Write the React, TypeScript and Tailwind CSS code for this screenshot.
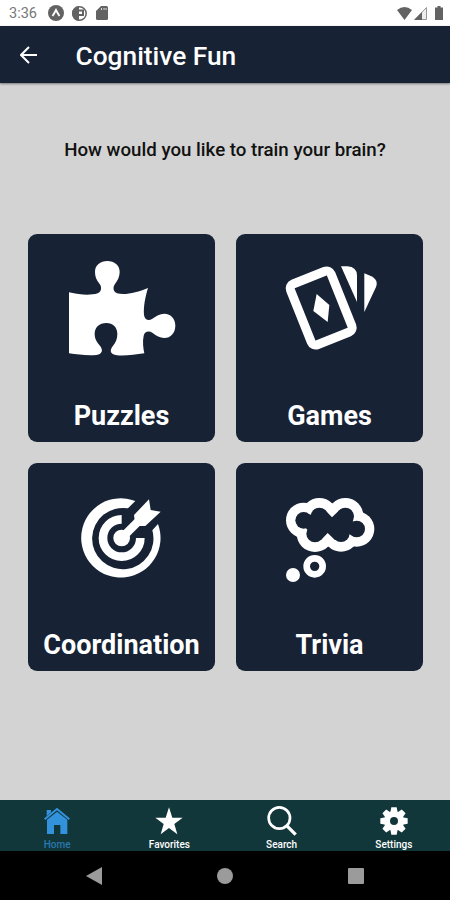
import type { ReactNode } from "react"

function PuzzleIcon() {
  return (
    <svg className="h-[97px] w-[110px]" viewBox="140 105 330 291" fill="white">
      <path d="M146 202C180 210 210 212 232 205C245 199 244 185 238 177C228 165 224 155 224 141C224 120 240 108 261 108C282 108 298 120 298 141C298 155 292 167 284 177C277 186 278 200 290 205C315 211 350 203 383 189C375 215 369 245 371 270C373 285 385 288 395 282C408 273 418 266 432 266C452 266 465 282 465 302C465 323 451 339 432 339C418 339 408 332 397 324C385 316 373 320 370 332C366 350 369 370 372 385C345 389 315 393 290 391C268 388 268 376 277 364C286 353 291 342 291 327C291 307 278 294 258 294C237 294 223 307 223 327C223 342 230 352 239 362C248 374 248 386 228 390C200 393 172 388 146 385Z" />
    </svg>
  )
}

function CardsIcon() {
  return (
    <svg className="h-[88px] w-[94px]" viewBox="162 117 282 264" fill="white">
      <rect
        x="208"
        y="151"
        width="131"
        height="196"
        rx="14"
        fill="none"
        stroke="white"
        strokeWidth="27"
        transform="rotate(-21.8 273.5 249)"
      />
      <path d="M260 207L298 240L293 291L250 258Z" />
      <path d="M333 124H352Q381 126 381 152V231Z" />
      <path d="M403 145L424 154Q446 165 438 186L403 261Z" />
    </svg>
  )
}

function TargetIcon() {
  return (
    <svg className="h-[82px] w-[82px]" viewBox="182 126 246 246" fill="none">
      <path d="M345 138A119 119 0 1 0 413 207L396 226A92 92 0 1 1 323 160Z" fill="white" />
      <path d="M304 193A56 56 0 1 0 360 249" stroke="white" strokeWidth="26" />
      <circle cx="304" cy="249" r="25" fill="white" />
      <path d="M304 249L352 201" stroke="white" strokeWidth="25" />
      <path d="M341 180L386 133L391 165L421 170L375 213H345Z" fill="white" />
    </svg>
  )
}

function ThoughtIcon() {
  return (
    <svg className="h-[86px] w-[90px]" viewBox="164 127 270 258">
      <g fill="white">
        <circle cx="220" cy="197" r="53" />
        <circle cx="267" cy="184" r="54" />
        <circle cx="345" cy="184" r="54" />
        <circle cx="379" cy="223" r="53" />
        <circle cx="332" cy="236" r="55" />
        <circle cx="254" cy="237" r="55" />
        <circle cx="188" cy="361" r="21" />
      </g>
      <g fill="#172235">
        <circle cx="220" cy="197" r="25" />
        <circle cx="267" cy="185" r="26" />
        <circle cx="345" cy="185" r="26" />
        <circle cx="379" cy="223" r="25" />
        <circle cx="332" cy="236" r="26" />
        <circle cx="254" cy="237" r="26" />
        <path d="M226 178L244 180L285 167L305 188L327 167L367 197L374 246L358 239L313 255L292 235L272 256L232 226L226 220Z" />
      </g>
      <circle cx="253" cy="335" r="24" fill="none" stroke="white" strokeWidth="20" />
    </svg>
  )
}

function HomeIcon() {
  return (
    <svg className="h-7 w-7" viewBox="129 49 84 84" fill="#3292db">
      <path d="M140 58H153V65L140 77Z" />
      <path d="M134 86L171 55L208 86" fill="none" stroke="#3292db" strokeWidth="6" />
      <path d="M141 87L171 63L202 87V130H181V103H162V130H141Z" />
    </svg>
  )
}

function StarIcon() {
  return (
    <svg className="h-7 w-7" viewBox="467 49 84 84" fill="white">
      <path d="M509 50L519 81H550L525 100L534 131L509 112L484 131L493 100L468 81H499Z" />
    </svg>
  )
}

function SearchIcon() {
  return (
    <svg className="h-[30px] w-[30px]" viewBox="124 44 90 90" fill="none" stroke="white">
      <circle cx="161" cy="80" r="32" strokeWidth="8" />
      <path d="M183 103L210 130" strokeWidth="10" />
    </svg>
  )
}

const teeth = [0, 45, 90, 135, 180, 225, 270, 315]

function GearIcon() {
  return (
    <svg className="h-7 w-7" viewBox="466 49 84 84" fill="white">
      {teeth.map((angle) => (
        <path key={angle} d="M497 66L500 50H516L519 66Z" transform={`rotate(${angle} 508 91)`} />
      ))}
      <circle cx="508" cy="91" r="21" fill="none" stroke="white" strokeWidth="18" />
    </svg>
  )
}

const categories = [
  { label: "Puzzles", icon: <PuzzleIcon />, pad: "pt-[26px]" },
  { label: "Games", icon: <CardsIcon />, pad: "pt-[30px] pl-[2px]" },
  { label: "Coordination", icon: <TargetIcon />, pad: "pt-[34px]" },
  { label: "Trivia", icon: <ThoughtIcon />, pad: "pt-[34px]" },
]

function CategoryCard({ label, icon, pad }: { label: string; icon: ReactNode; pad: string }) {
  return (
    <button className="flex h-[208px] flex-col items-center justify-between rounded-[9px] bg-[#172235] pb-2">
      <div className={pad}>{icon}</div>
      <span className="text-[27px] leading-9 font-bold text-white">{label}</span>
    </button>
  )
}

const tabs = [
  { label: "Home", icon: <HomeIcon />, color: "text-[#2878ae]" },
  { label: "Favorites", icon: <StarIcon />, color: "text-white" },
  { label: "Search", icon: <SearchIcon />, color: "text-white" },
  { label: "Settings", icon: <GearIcon />, color: "text-white" },
]

function StatusBar() {
  return (
    <div className="flex h-[26px] items-center justify-between bg-white pr-[7px] pl-[9px] text-[#636363]">
      <div className="flex items-center">
        <span className="w-[39px] pt-[2px] text-[14.5px] text-[#777]">3:36</span>
        <svg className="h-4 w-4" viewBox="0 0 16 16">
          <circle cx="8" cy="8" r="8" fill="currentColor" />
          <path d="M4.500 11Q6.500 8 8 5Q9.500 8 11.500 11" fill="none" stroke="white" strokeWidth="1.800" />
        </svg>
        <svg className="ml-2 h-[15px] w-[15px]" viewBox="0 0 15 15">
          <circle cx="7.500" cy="7.500" r="6.700" fill="white" stroke="currentColor" strokeWidth="1.500" />
          <path d="M7 0V15Q0 14 0 7.500Q0 1 7 0Z" fill="currentColor" />
          <path d="M6 4.500H11V9H6" fill="none" stroke="currentColor" strokeWidth="2" />
        </svg>
        <svg className="ml-[9px] h-[14px] w-3" viewBox="0 0 12 14" fill="currentColor">
          <path d="M5 0H10.500Q12 0 12 1.500V12.500Q12 14 10.500 14H1.500Q0 14 0 12.500V5Z" />
          <path d="M5.500 2V4M8 2V4M10 2V4" stroke="#ddd" />
        </svg>
      </div>
      <div className="flex items-center">
        <svg className="h-[13px] w-[15px]" viewBox="0 0 15 13" fill="currentColor">
          <path d="M0 3Q7.500 -3 15 3L7.500 13Z" />
        </svg>
        <svg className="ml-[2px] h-[14px] w-[14px]" viewBox="0 0 14 14">
          <path d="M1 13.500L12.500 1.500V13.500Z" fill="#eee" stroke="#999" />
          <path d="M0 14L8 6V14Z" fill="currentColor" />
        </svg>
        <svg className="ml-[7px] h-[14px] w-2" viewBox="0 0 8 14" fill="currentColor">
          <path d="M2.500 0H5.500V1.500H8V14H0V1.500H2.500Z" />
        </svg>
      </div>
    </div>
  )
}

export default function App() {
  return (
    <div className="flex h-[900px] w-[450px] flex-col overflow-hidden bg-[#d3d3d3] font-[Roboto,sans-serif]">
      <StatusBar />
      <header className="flex h-[57px] items-center bg-[#172235] pl-5 text-white shadow-[0_1px_2px_#777]">
        <svg className="h-[18px] w-[18px]" viewBox="0 0 18 18" fill="none" stroke="white" strokeWidth="2">
          <path d="M17 9H1.500M9 1L1 9L9 17" />
        </svg>
        <h1 className="ml-[37.5px] pt-[3px] text-[26.3px] leading-8 font-medium">Cognitive Fun</h1>
      </header>

      <main className="flex flex-1 flex-col">
        <h2 className="mt-[55px] text-center text-[18.7px] leading-6 font-medium text-[#111]">
          How would you like to train your brain?
        </h2>
        <div className="mt-[72px] grid grid-cols-2 gap-[21px] pr-[27px] pl-7">
          {categories.map((category) => (
            <CategoryCard key={category.label} {...category} />
          ))}
        </div>
      </main>

      <nav className="grid h-[51px] grid-cols-4 bg-[#12373a] pl-px">
        {tabs.map((tab) => (
          <button key={tab.label} className={`flex flex-col items-center ${tab.color}`}>
            <span className="flex h-[39px] items-center pt-[2px]">{tab.icon}</span>
            <span className="text-[10px] leading-3 font-medium">{tab.label}</span>
          </button>
        ))}
      </nav>

      <footer className="flex h-[49px] items-center justify-between bg-black pr-[86px] pl-[86px]">
        <svg className="h-[18px] w-4" viewBox="0 0 16 18" fill="#9b9b9b">
          <path d="M0 9L16 0V18Z" />
        </svg>
        <div className="h-4 w-4 rounded-full bg-[#9b9b9b]" />
        <div className="h-4 w-4 rounded-[1px] bg-[#9b9b9b]" />
      </footer>
    </div>
  )
}
